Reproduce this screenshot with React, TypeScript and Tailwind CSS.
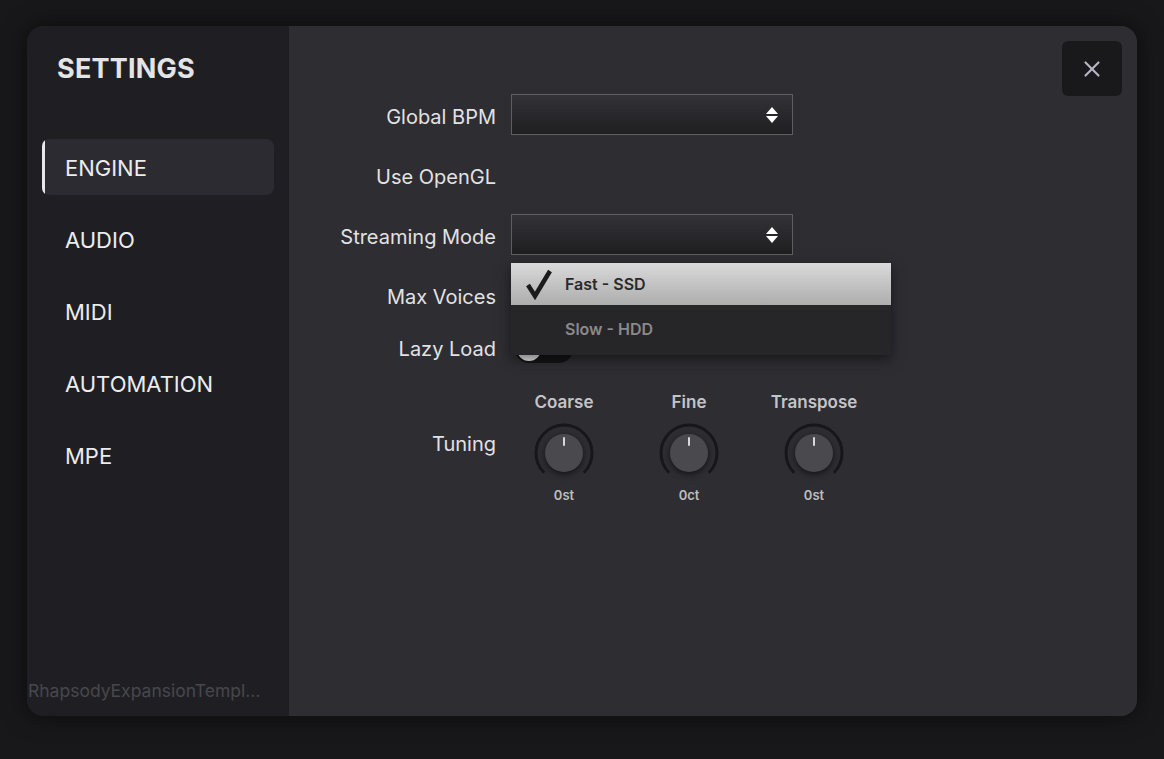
import { X } from "lucide-react";

const nav = ["ENGINE", "AUDIO", "MIDI", "AUTOMATION", "MPE"];

function Spinner() {
  return (
    <svg width="14" height="18" viewBox="0 0 14 18" className="text-white">
      <path d="M7 1 L13 8 H1 Z" fill="currentColor" />
      <path d="M1 10 H13 L7 17 Z" fill="currentColor" />
    </svg>
  );
}

function Select() {
  return (
    <div className="w-[282px] h-[41px] border border-[#5e5e62] bg-gradient-to-b from-[#333337] to-[#1f1f22] flex items-center justify-end pr-[13px]">
      <Spinner />
    </div>
  );
}

function Knob({ label, value }: { label: string; value: string }) {
  return (
    <div className="w-[100px] flex flex-col items-center">
      <div className="text-[17px] font-semibold text-[#c4c4c8] leading-5">{label}</div>
      <div className="mt-[10px] w-[62px] h-[62px] relative flex items-center justify-center">
        <svg width="62" height="62" viewBox="0 0 62 62" className="absolute inset-0">
          <path
            d="M 11.2 50.8 A 28 28 0 1 1 50.8 50.8"
            fill="none"
            stroke="#17171a"
            strokeWidth="3"
          />
        </svg>
        <div className="w-[38px] h-[38px] rounded-full bg-[#4a4a4e] shadow-[0_2px_6px_rgba(0,0,0,0.6)] flex justify-center">
          <div className="w-[2px] h-[9px] bg-[#d8d8d8] mt-[3px] rounded-sm" />
        </div>
      </div>
      <div className="mt-[3px] text-[13px] font-semibold text-[#bdbdc0] leading-4">{value}</div>
    </div>
  );
}

function Label({ children }: { children: string }) {
  return <div className="text-right text-[20px] text-[#e2e2e4]">{children}</div>;
}

export default function App() {
  return (
    <div className="w-[1164px] h-[759px] bg-[#18181a] pt-[26px] pl-[27px] font-['Inter',sans-serif]">
      <div className="w-[1110px] h-[690px] rounded-2xl overflow-hidden flex shadow-[0_0_24px_rgba(0,0,0,0.55)]">
        <aside className="w-[262px] bg-[#1f1f23] flex flex-col">
          <h1 className="pl-[30px] pt-[23px] text-[27px] font-bold text-[#e4e4e6] tracking-[0.2px]">SETTINGS</h1>
          <nav className="mt-[49px] pl-[15px] pr-[15px] flex flex-col gap-[16px]">
            {nav.map((n, i) => (
              <div
                key={n}
                className={
                  i === 0
                    ? "h-[56px] rounded-lg bg-[#2c2b31] flex items-center relative"
                    : "h-[56px] flex items-center"
                }
              >
                {i === 0 && <div className="absolute left-0 top-0 bottom-0 w-[7px] rounded-l-lg bg-[#e8e8e8] [clip-path:inset(0_4px_0_0)]" />}
                <span className="pl-[23px] pt-[3px] text-[22px] text-[#ececee]">{n}</span>
              </div>
            ))}
          </nav>
          <div className="mt-auto mb-[12px] pl-[1px] pr-[22px] truncate text-[17.5px] text-[#47474c]">
            RhapsodyExpansionTemplate
          </div>
        </aside>
        <main className="flex-1 bg-[#2e2d32] relative pt-[61px]">
          <button className="absolute right-[15px] top-[15px] w-[60px] h-[55px] rounded-md bg-[#19191c] flex items-center justify-center">
            <X className="size-[26px] text-[#b4b4c4]" strokeWidth={2} />
          </button>
          <div className="grid grid-cols-[207px_1fr] gap-x-[15px] items-center">
            <div className="h-[60px] flex items-center justify-end"><Label>Global BPM</Label></div>
            <div className="h-[60px] pt-[7px]"><Select /></div>

            <div className="h-[60px] flex items-center justify-end"><Label>Use OpenGL</Label></div>
            <div className="h-[60px]" />

            <div className="h-[60px] flex items-center justify-end"><Label>Streaming Mode</Label></div>
            <div className="h-[60px] pt-[7px] relative">
              <Select />
              <div className="absolute left-0 top-[56px] z-10 w-[380px] bg-[#262628] shadow-[0_4px_12px_rgba(0,0,0,0.5)]">
                <div className="h-[42px] bg-gradient-to-b from-[#dadada] to-[#adadad] flex items-center">
                  <svg width="26" height="32" viewBox="0 0 26 32" className="ml-[15px]">
                    <path d="M2 17 L9 28 L24 3" fill="none" stroke="#1b1b1b" strokeWidth="4.5" strokeLinejoin="miter" />
                  </svg>
                  <span className="ml-[13px] text-[16px] font-semibold text-[#2a2a2c]">Fast - SSD</span>
                </div>
                <div className="h-[50px] flex items-center">
                  <span className="ml-[54px] text-[16px] font-semibold text-[#8a8a8c] -mt-[3px]">Slow - HDD</span>
                </div>
              </div>
            </div>

            <div className="h-[60px] flex items-center justify-end"><Label>Max Voices</Label></div>
            <div className="h-[60px]" />

            <div className="h-[44px] flex items-center justify-end"><Label>Lazy Load</Label></div>
            <div className="h-[44px] flex items-center pl-[4px]">
              <div className="w-[58px] h-[28px] rounded-full bg-[#141416] flex items-center px-[2px]">
                <div className="w-[24px] h-[24px] rounded-full bg-[#e6e6e6]" />
              </div>
            </div>

            <div className="mt-[21px] h-[111px] flex items-center justify-end pb-[8px]"><Label>Tuning</Label></div>
            <div className="mt-[21px] h-[111px] flex items-start gap-[25px] pl-[3px]">
              <Knob label="Coarse" value="0st" />
              <Knob label="Fine" value="0ct" />
              <Knob label="Transpose" value="0st" />
            </div>
          </div>
        </main>
      </div>
    </div>
  );
}
